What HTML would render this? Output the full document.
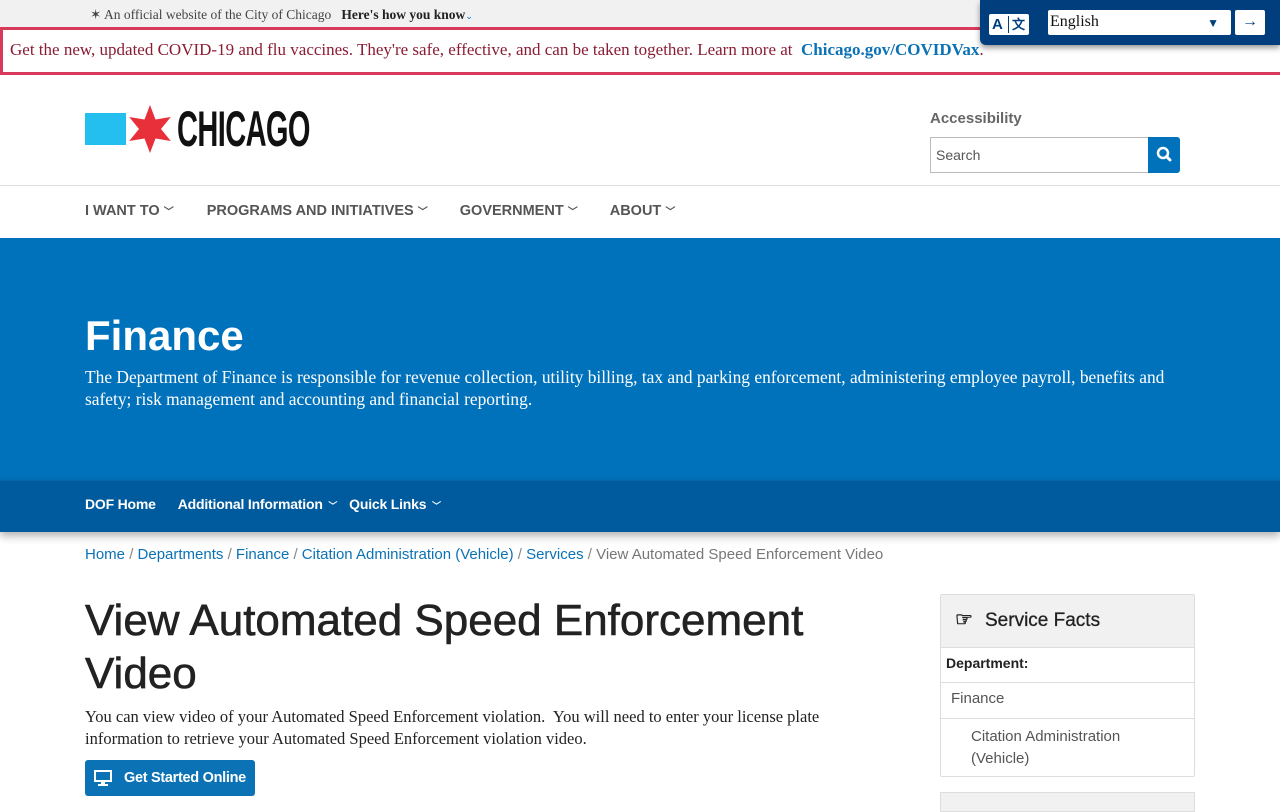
<!DOCTYPE html>
<html><head><meta charset="utf-8"><style>
*{box-sizing:border-box;margin:0;padding:0}
body{width:1280px;height:800px;overflow:hidden;background:#fff;font-family:"Liberation Sans",sans-serif;position:relative}
.abs{position:absolute}
.serif{font-family:"Liberation Serif",serif}
</style></head><body>
<div class="abs" style="left:0;top:0;width:1280px;height:28px;background:#f1f1f1"></div>
<div class="abs serif" style="left:90px;top:7px;font-size:13.5px;color:#444;white-space:nowrap">✶ An official website of the City of Chicago &nbsp; <b style="color:#222">Here's how you know</b><span style="color:#0072bb;font-size:9px">⌄</span></div>
<div class="abs" style="left:0;top:27px;width:1280px;height:48px;border:3px solid #d83a5c;border-right:none"></div>
<div class="abs serif" style="left:10px;top:40px;font-size:17px;color:#8a1c34;white-space:nowrap">Get the new, updated COVID-19 and flu vaccines. They're safe, effective, and can be taken together. Learn more at &nbsp;<b style="color:#0b72b5">Chicago.gov/COVIDVax</b>.</div>
<div class="abs" style="left:980px;top:0;width:300px;height:45px;background:#003e7e;border-bottom-left-radius:6px;box-shadow:0 3px 6px rgba(0,0,0,.4)"></div>
<div class="abs" style="left:989px;top:14px;width:40px;height:21px;background:#fff;border-radius:2px;font-weight:bold;color:#003e7e;font-size:15px;line-height:21px"><span style="position:absolute;left:3px">A</span><span style="position:absolute;left:19px;top:2px;width:1px;height:17px;background:#003e7e"></span><span style="position:absolute;left:23px;font-size:13px">文</span></div>
<div class="abs serif" style="left:1048px;top:10px;width:183px;height:25px;background:#fff;border-radius:2px;font-size:16px;line-height:24px;padding-left:2px;color:#111">English<span style="position:absolute;right:12px;top:1px;font-size:12px;color:#003e7e">▼</span></div>
<div class="abs" style="left:1235px;top:10px;width:30px;height:25px;background:#fff;border-radius:2px;color:#003e7e;font-weight:bold;font-size:16px;text-align:center;line-height:24px">→</div>
<div class="abs" style="left:85px;top:113px;width:41px;height:32px;background:#25bfef"></div>
<svg class="abs" style="left:128px;top:104px" width="44" height="50" viewBox="-22 -25 44 50"><polygon fill="#e8303a" points="0,-24 5.5,-9.5 20.8,-12 11,0 20.8,12 5.5,9.5 0,24 -5.5,9.5 -20.8,12 -11,0 -20.8,-12 -5.5,-9.5"/></svg>
<div class="abs" style="left:177px;top:102px;font-size:50px;font-weight:bold;color:#111;transform:scaleX(.58);transform-origin:left;letter-spacing:-1px;line-height:54px">CHICAGO</div>
<div class="abs" style="left:930px;top:110px;font-size:15px;font-weight:bold;color:#666">Accessibility</div>
<div class="abs" style="left:930px;top:137px;width:220px;height:36px;border:1px solid #bbb;font-size:14px;color:#555;padding:9px 5px">Search</div>
<div class="abs" style="left:1148px;top:137px;width:32px;height:36px;background:#0072bc;border-radius:0 3px 3px 0"><svg width="32" height="36"><circle cx="15" cy="16" r="5" stroke="#fff" stroke-width="2.5" fill="none"/><line x1="18.5" y1="19.5" x2="22" y2="23" stroke="#fff" stroke-width="3" stroke-linecap="round"/></svg></div>
<div class="abs" style="left:0;top:185px;width:1280px;height:1px;background:#ddd"></div>
<div class="abs" style="left:85px;top:203px;font-size:14.5px;font-weight:bold;color:#555;white-space:nowrap">I WANT TO <span style="font-size:10px">﹀</span><span style="margin-left:33px">PROGRAMS AND INITIATIVES <span style="font-size:10px">﹀</span></span><span style="margin-left:32px">GOVERNMENT <span style="font-size:10px">﹀</span></span><span style="margin-left:32px">ABOUT <span style="font-size:10px">﹀</span></span></div>
<div class="abs" style="left:0;top:238px;width:1280px;height:243px;background:#0072bb"></div>
<div class="abs" style="left:85px;top:312px;font-size:42px;font-weight:bold;color:#fff">Finance</div>
<div class="abs serif" style="left:85px;top:366px;width:1100px;font-size:17.4px;line-height:22px;color:#fff">The Department of Finance is responsible for revenue collection, utility billing, tax and parking enforcement, administering employee payroll, benefits and safety; risk management and accounting and financial reporting.</div>
<div class="abs" style="left:0;top:480px;width:1280px;height:52px;background:#005a9e;border-top:1px solid #0a66ac;box-shadow:0 4px 8px rgba(0,0,0,.3)"></div>
<div class="abs" style="left:85px;top:496px;font-size:14px;font-weight:bold;color:#fff;white-space:nowrap;letter-spacing:-.2px">DOF Home<span style="margin-left:22px">Additional Information <span style="font-size:9px;margin-left:2px">﹀</span></span><span style="margin-left:12px">Quick Links <span style="font-size:9px;margin-left:2px">﹀</span></span></div>
<div class="abs" style="left:85px;top:546px;font-size:15px;color:#0b72b5;white-space:nowrap">Home <span style="color:#888">/</span> Departments <span style="color:#888">/</span> Finance <span style="color:#888">/</span> Citation Administration (Vehicle) <span style="color:#888">/</span> Services <span style="color:#888">/</span> <span style="color:#777">View Automated Speed Enforcement Video</span></div>
<div class="abs" style="left:85px;top:594px;width:800px;font-size:44px;line-height:53px;color:#222;-webkit-text-stroke:.6px #222">View Automated Speed Enforcement Video</div>
<div class="abs serif" style="left:85px;top:706px;width:775px;font-size:16.5px;line-height:22px;color:#222">You can view video of your Automated Speed Enforcement violation.&nbsp; You will need to enter your license plate information to retrieve your Automated Speed Enforcement violation video.</div>
<div class="abs" style="left:85px;top:760px;width:170px;height:36px;background:#0b72b5;border-radius:3px;color:#fff;font-weight:bold;font-size:14.5px;line-height:36px;padding-left:39px;white-space:nowrap;letter-spacing:-.3px">Get Started Online
<svg style="position:absolute;left:9px;top:10px" width="18" height="16"><rect x="1" y="1" width="16" height="10" fill="none" stroke="#fff" stroke-width="2"/><rect x="7" y="11" width="4" height="3" fill="#fff"/><rect x="4" y="14" width="10" height="2" fill="#fff"/></svg></div>
<div class="abs" style="left:940px;top:594px;width:255px;height:183px;border:1px solid #ddd;border-radius:2px"></div>
<div class="abs" style="left:941px;top:595px;width:253px;height:53px;background:#f1f1f1;border-bottom:1px solid #ddd"></div>
<div class="abs" style="left:955px;top:607px;font-size:20px;color:#222;font-weight:bold">☞</div>
<div class="abs" style="left:985px;top:610px;font-size:19px;color:#222;-webkit-text-stroke:.3px #222">Service Facts</div>
<div class="abs" style="left:946px;top:655px;font-size:14px;font-weight:bold;color:#222">Department:</div>
<div class="abs" style="left:941px;top:682px;width:253px;height:1px;background:#ddd"></div>
<div class="abs" style="left:951px;top:690px;font-size:15px;color:#555">Finance</div>
<div class="abs" style="left:941px;top:718px;width:253px;height:1px;background:#ddd"></div>
<div class="abs" style="left:971px;top:726px;font-size:15px;line-height:22px;color:#555">Citation Administration<br>(Vehicle)</div>
<div class="abs" style="left:940px;top:792px;width:255px;height:20px;border:1px solid #ddd;background:#f1f1f1"></div>
</body></html>
